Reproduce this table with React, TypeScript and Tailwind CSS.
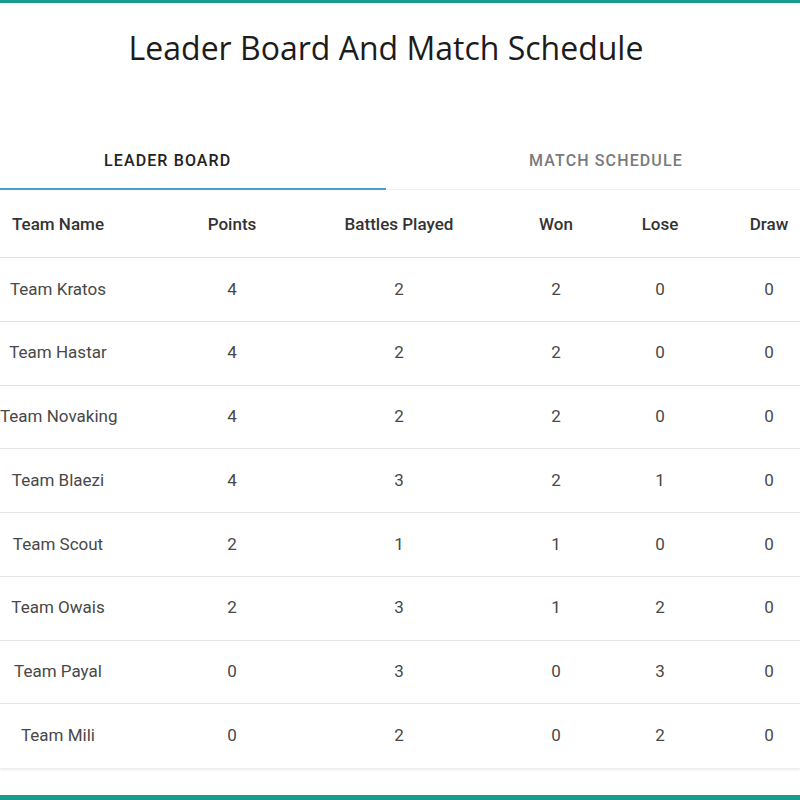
const rows = [
  { name: "Team Kratos", points: 4, played: 2, won: 2, lose: 0, draw: 0 },
  { name: "Team Hastar", points: 4, played: 2, won: 2, lose: 0, draw: 0 },
  { name: "Team Novaking", points: 4, played: 2, won: 2, lose: 0, draw: 0 },
  { name: "Team Blaezi", points: 4, played: 3, won: 2, lose: 1, draw: 0 },
  { name: "Team Scout", points: 2, played: 1, won: 1, lose: 0, draw: 0 },
  { name: "Team Owais", points: 2, played: 3, won: 1, lose: 2, draw: 0 },
  { name: "Team Payal", points: 0, played: 3, won: 0, lose: 3, draw: 0 },
  { name: "Team Mili", points: 0, played: 2, won: 0, lose: 2, draw: 0 },
];

// column boxes, each centred on the reference column
const Cells = ({ values }: { values: (string | number)[] }) => (
  <>
    <div className="w-[196px] pr-[80px] text-center whitespace-nowrap">{values[0]}</div>
    <div className="w-[72px] text-center">{values[1]}</div>
    <div className="w-[262px] text-center">{values[2]}</div>
    <div className="w-[52px] text-center">{values[3]}</div>
    <div className="w-[156px] text-center">{values[4]}</div>
    <div className="w-[62px] text-center">{values[5]}</div>
  </>
);

export default function App() {
  return (
    <div className="w-[800px] h-[800px] bg-white flex flex-col font-['Roboto',sans-serif] overflow-hidden">
      <div className="h-[3px] bg-[#179c8d]" />

      <h1 className="w-[772px] mt-[26px] text-center text-[32px] leading-[38px] font-medium text-[#1c1c1c] font-['Open_Sans',sans-serif]">
        Leader Board And Match Schedule
      </h1>

      <div className="mt-[73px] flex h-[50px] border-b border-[#f0f0f0]">
        <div className="relative w-[386px] flex items-center pb-[8px] pl-[104px] text-[16px] font-medium tracking-[0.07em] text-[#222]">
          LEADER BOARD
          <div className="absolute left-0 right-0 -bottom-px h-[2px] bg-[#4a9ed6]" />
        </div>
        <div className="flex-1 flex items-center pb-[8px] pl-[143px] text-[16px] font-medium tracking-[0.07em] text-[#7a7a7a]">
          MATCH SCHEDULE
        </div>
      </div>

      <div className="flex items-center h-[68px] pt-[2px] border-b border-[#e4e4e4] text-[17px] font-medium text-[#333]">
        <Cells values={["Team Name", "Points", "Battles Played", "Won", "Lose", "Draw"]} />
      </div>

      <div className="flex flex-col shadow-[0_2px_2px_rgba(0,0,0,0.08)]">
        {rows.map((r) => (
          <div
            key={r.name}
            className="flex items-center h-[63.75px] border-b border-[#e4e4e4] last:border-b-0 text-[17px] text-[#484848]"
          >
            <Cells values={[r.name, r.points, r.played, r.won, r.lose, r.draw]} />
          </div>
        ))}
      </div>

      <div className="flex-1" />
      <div className="h-[5px] bg-[#179c8d]" />
    </div>
  );
}
